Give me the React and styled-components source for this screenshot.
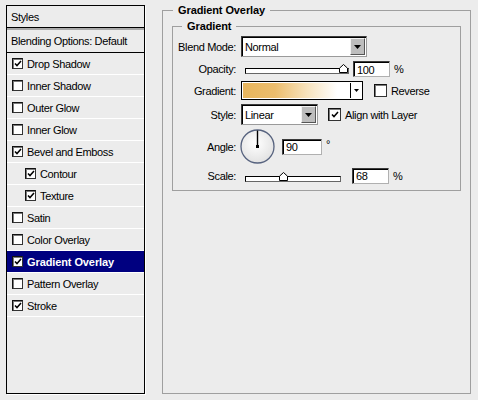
import styled, { createGlobalStyle } from 'styled-components';

const GlobalStyle = createGlobalStyle`
  html, body {
    margin: 0;
    padding: 0;
    background: #ececec;
  }
  body {
    font-family: "Liberation Sans", Arial, sans-serif;
    font-size: 11px;
    color: #000;
  }
`;

const effects = [
    { name: 'Drop Shadow', checked: true },
    { name: 'Inner Shadow' },
    { name: 'Outer Glow' },
    { name: 'Inner Glow' },
    { name: 'Bevel and Emboss', checked: true },
    { name: 'Contour', checked: true, nested: true },
    { name: 'Texture', checked: true, nested: true },
    { name: 'Satin' },
    { name: 'Color Overlay' },
    { name: 'Gradient Overlay', checked: true, selected: true },
    { name: 'Pattern Overlay' },
    { name: 'Stroke', checked: true },
];

const Check = ({ checked, size = 11 }) => (
    <CheckBox $size={size}>
        {checked && (
            <svg width="8" height="7" viewBox="0 0 8 7">
                <polyline
                    points="1,3.4 3,5.6 7,1"
                    fill="none"
                    stroke="#000"
                    strokeWidth="1.5"
                />
            </svg>
        )}
    </CheckBox>
);

const Arrow = ({ w = 7, h = 4 }) => (
    <svg width={w} height={h} viewBox={`0 0 ${w} ${h}`}>
        <polygon points={`0,0 ${w},0 ${w / 2},${h}`} fill="#000" />
    </svg>
);

const Dropdown = ({ width, children }) => (
    <Select $w={width}>
        <SelectText>{children}</SelectText>
        <DropButton>
            <Arrow />
        </DropButton>
    </Select>
);

const Slider = ({ width, value, min, max }) => {
    // thumb travels along the track, 4px inset on the left
    const frac = (value - min) / (max - min);
    const travel = width - 16;
    return (
        <SliderBody $w={width}>
            <Track />
            <Thumb style={{ left: 4 + frac * travel }}>
                <svg width="9" height="9" viewBox="0 0 9 9">
                    <polygon
                        points="0.5,8.5 0.5,4.2 4.5,0.5 8.5,4.2 8.5,8.5"
                        fill="#fff"
                        stroke="#000"
                        strokeWidth="1"
                    />
                </svg>
            </Thumb>
        </SliderBody>
    );
};

const Dial = ({ angle }) => {
    const rad = (angle * Math.PI) / 180;
    const x2 = 17.5 + 16 * Math.cos(rad);
    const y2 = 17.5 - 16 * Math.sin(rad);
    return (
        <svg width="36" height="36" viewBox="0 0 36 36">
            <defs>
                <radialGradient id="dialFill" cx="0.45" cy="0.4" r="0.6">
                    <stop offset="0" stopColor="#ffffff" />
                    <stop offset="1" stopColor="#e2e2e2" />
                </radialGradient>
            </defs>
            <circle cx="17.5" cy="17.5" r="16.5" fill="url(#dialFill)" stroke="#56627e" strokeWidth="1.3" />
            <line x1="17.5" y1="17.5" x2={x2} y2={y2} stroke="#000" strokeWidth="1.4" />
            <rect x="16" y="16" width="3" height="3" fill="#000" />
        </svg>
    );
};

const App = () => {
    return (
        <>
            <GlobalStyle />
            <Window>
                <Panel>
                    <Header>Styles</Header>
                    <Blending>Blending Options: Default</Blending>
                    {effects.map(item => (
                        <Row
                            key={item.name}
                            $nested={item.nested}
                            $selected={item.selected}
                        >
                            <Check checked={item.checked} />
                            <span>{item.name}</span>
                        </Row>
                    ))}
                </Panel>

                <Group>
                    <Legend $offset={10}>Gradient Overlay</Legend>
                    <GroupBody>
                        <InnerGroup>
                            <Legend $offset={9}>Gradient</Legend>
                            <Form>
                                <FormRow $h={21}>
                                    <Label>Blend Mode:</Label>
                                    <Dropdown width={126}>Normal</Dropdown>
                                </FormRow>

                                <FormRow $h={16}>
                                    <Label>Opacity:</Label>
                                    <Slider width={110} value={100} min={0} max={100} />
                                    <Field $w={37} $gap={2} defaultValue="100" readOnly />
                                    <Unit>%</Unit>
                                </FormRow>

                                <FormRow $h={19}>
                                    <Label>Gradient:</Label>
                                    <GradientPicker>
                                        <GradientSwatch />
                                        <GradientArrow>
                                            <Arrow w={5} h={3} />
                                        </GradientArrow>
                                    </GradientPicker>
                                    <Option $gap={11}>
                                        <Check size={13} />
                                        <span>Reverse</span>
                                    </Option>
                                </FormRow>

                                <FormRow $h={21}>
                                    <Label>Style:</Label>
                                    <Dropdown width={77}>Linear</Dropdown>
                                    <Option $gap={10}>
                                        <Check size={13} checked />
                                        <span>Align with Layer</span>
                                    </Option>
                                </FormRow>

                                <FormRow $h={35}>
                                    <Label>Angle:</Label>
                                    <DialWrap>
                                        <Dial angle={90} />
                                    </DialWrap>
                                    <Field $w={40} $gap={6} defaultValue="90" readOnly />
                                    <Degree>°</Degree>
                                </FormRow>

                                <FormRow $h={15}>
                                    <Label>Scale:</Label>
                                    <SliderWrap>
                                        <Slider width={102} value={68} min={15} max={150} />
                                    </SliderWrap>
                                    <Field $w={37} $gap={9} defaultValue="68" readOnly />
                                    <Unit>%</Unit>
                                </FormRow>
                            </Form>
                        </InnerGroup>
                    </GroupBody>
                </Group>
            </Window>
        </>
    );
};
export default App;

const Window = styled.div`
    width: 478px;
    height: 400px;
    box-sizing: border-box;
    padding: 5px 0 6px 6px;
    display: flex;
    align-items: stretch;
    background: #ececec;
    letter-spacing: -0.35px;
    overflow: hidden;
`;

const Panel = styled.div`
    width: 139px;
    flex-shrink: 0;
    box-sizing: border-box;
    border: 1px solid #000;
    box-shadow: 1px 1px 0 #fff;
    display: flex;
    flex-direction: column;
`;

const Header = styled.div`
    height: 21px;
    padding-left: 4px;
    display: flex;
    align-items: center;
    border-bottom: 1px solid #000;
`;

const Blending = styled.div`
    height: 22px;
    padding-left: 4px;
    display: flex;
    align-items: center;
    border-top: 2px solid #a9a9a9;
    border-bottom: 1px solid #000;
`;

const Row = styled.div`
    height: 21px;
    display: flex;
    align-items: center;
    gap: 4px;
    padding-left: ${p => (p.$nested ? 18 : 5)}px;
    border-bottom: 1px solid #fff;
    background: ${p => (p.$selected ? '#000080' : 'transparent')};
    color: ${p => (p.$selected ? '#fff' : '#000')};
    font-weight: ${p => (p.$selected ? 'bold' : 'normal')};
    letter-spacing: ${p => (p.$selected ? '-0.1px' : '-0.35px')};
`;

const CheckBox = styled.span`
    width: ${p => p.$size}px;
    height: ${p => p.$size}px;
    box-sizing: border-box;
    flex-shrink: 0;
    background: #fff;
    border: 1px solid #111;
    border-right-color: #333;
    border-bottom-color: #333;
    box-shadow: inset 1px 1px 0 #7a7a7a;
    display: inline-flex;
    align-items: center;
    justify-content: center;
`;

const Group = styled.fieldset`
    margin: -1px 0 0 17px;
    padding: 0;
    width: 309px;
    box-sizing: border-box;
    min-width: 0;
    border: 1px solid #9f9f9f;
`;

const Legend = styled.legend`
    margin-left: ${p => p.$offset}px;
    padding: 0 5px;
    font-weight: bold;
    line-height: 13px;
    letter-spacing: -0.1px;
`;

const GroupBody = styled.div`
    padding: 3px 0 0 9px;
`;

const InnerGroup = styled.fieldset`
    margin: 0;
    padding: 0;
    width: 289px;
    box-sizing: border-box;
    min-width: 0;
    border: 1px solid #9f9f9f;
`;

const Form = styled.div`
    display: flex;
    flex-direction: column;
    gap: 4px;
    padding: 3px 0 7px 0;
`;

const FormRow = styled.div`
    height: ${p => p.$h}px;
    display: flex;
    align-items: center;
`;

const Label = styled.span`
    width: 63px;
    flex-shrink: 0;
    margin-right: 5px;
    text-align: right;
`;

const Select = styled.div`
    width: ${p => p.$w}px;
    height: 21px;
    box-sizing: border-box;
    background: #fff;
    border: 1px solid #3c3c3c;
    border-right-color: #9a9a9a;
    border-bottom-color: #9a9a9a;
    box-shadow: inset 1px 1px 0 #000;
    display: flex;
    align-items: center;
    padding: 1px 1px 1px 3px;
`;

const SelectText = styled.span`
    flex: 1;
    padding-top: 1px;
`;

const DropButton = styled.span`
    width: 15px;
    height: 17px;
    box-sizing: border-box;
    background: #bdbdbd;
    border: 1px solid;
    border-color: #f2f2f2 #555 #555 #f2f2f2;
    display: flex;
    align-items: center;
    justify-content: center;
`;

const SliderWrap = styled.div`
    display: flex;
    margin-top: 2px;
`;

const SliderBody = styled.div`
    position: relative;
    width: ${p => p.$w}px;
    height: 12px;
    flex-shrink: 0;
`;

const Track = styled.div`
    position: absolute;
    left: 4px;
    right: 2px;
    top: 5px;
    height: 4px;
    background: #fff;
    border: 1px solid #000;
    border-right-color: #666;
    border-bottom-color: #666;
`;

const Thumb = styled.span`
    position: absolute;
    top: 1px;
    width: 9px;
    height: 9px;
    display: flex;
`;

const Field = styled.input`
    width: ${p => p.$w}px;
    height: 16px;
    box-sizing: border-box;
    margin: 0 0 0 ${p => p.$gap}px;
    padding: 1px 0 0 3px;
    font: 11px "Liberation Sans", Arial, sans-serif;
    letter-spacing: -0.35px;
    color: #000;
    background: #fff;
    border: 1px solid #3c3c3c;
    border-right-color: #b0b0b0;
    border-bottom-color: #b0b0b0;
    box-shadow: inset 1px 1px 0 #000;
    outline: none;
`;

const Unit = styled.span`
    margin-left: 4px;
`;

const Degree = styled.span`
    margin-left: 4px;
    align-self: flex-start;
    margin-top: 9px;
`;

const GradientPicker = styled.div`
    width: 122px;
    height: 19px;
    box-sizing: border-box;
    display: flex;
    background: #fff;
    border: 1px solid #000;
    padding: 1px 0 1px 1px;
`;

const GradientSwatch = styled.div`
    flex: 1;
    background: linear-gradient(to right, #e8b55c 0%, #ecbd6d 30%, #f7e3bd 60%, #ffffff 88%);
    border-right: 1px solid #000;
`;

const GradientArrow = styled.div`
    width: 11px;
    display: flex;
    align-items: center;
    justify-content: center;
`;

const Option = styled.label`
    display: flex;
    align-items: center;
    gap: 4px;
    margin-left: ${p => p.$gap}px;
`;

const DialWrap = styled.div`
    display: flex;
    margin-left: -1px;
`;
